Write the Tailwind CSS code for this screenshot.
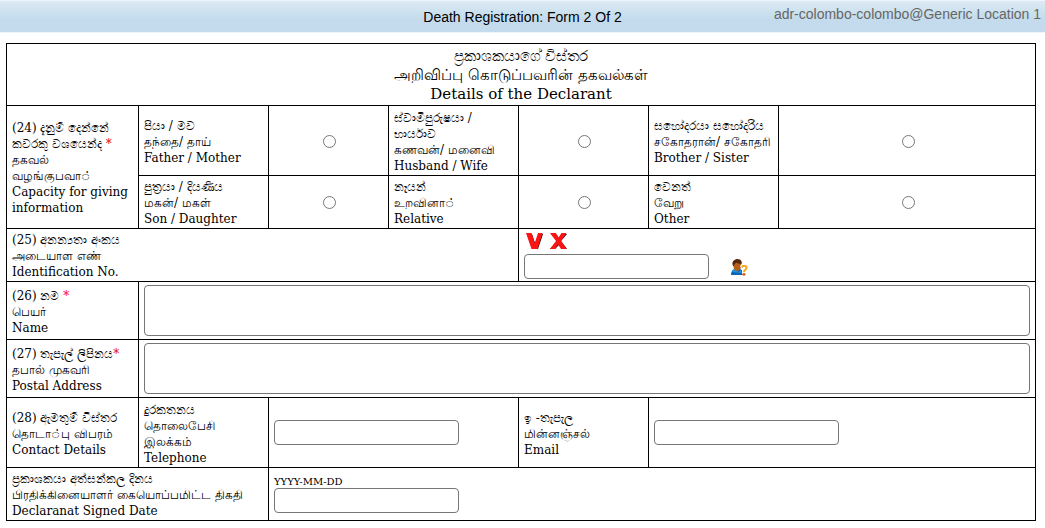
<!DOCTYPE html>
<html lang="en">
<head>
<meta charset="utf-8">
<meta name="viewport" content="width=device-width, initial-scale=1">
<title>Death Registration: Form 2 Of 2</title>
<script src="https://cdn.jsdelivr.net/npm/@tailwindcss/browser@4"></script>
</head>
<body class="bg-white text-black">
<header class="grid h-8 grid-cols-[1fr_auto_1fr] border-t border-[#eef5fa] bg-linear-to-b from-[#dceaf3] from-0% via-[#c6deed] via-50% to-[#c4dbee] to-60% font-['Liberation_Sans',sans-serif] text-[14px] leading-5 shadow-[0_1px_0_#edf4fa]">
  <h1 class="col-start-2 pt-[6px]">Death Registration: Form 2 Of 2</h1>
  <p class="whitespace-nowrap pt-[3px] pr-1 text-right text-[#666]">adr-colombo-colombo@Generic Location 1</p>
</header>
<main class="px-[6px] pt-[11px]">
<form class="pr-[3px]">
<table class="w-full table-fixed border-collapse border border-black font-['DejaVu_Serif',serif] text-[12px] leading-4 [&_label]:block [&_label]:pt-0.5 [&_td]:border [&_td]:border-black [&_td]:px-[5px] [&_td]:py-0 [&_th]:border [&_th]:border-black [&_th]:px-[5px] [&_th]:pt-0.5 [&_th]:pb-0 [&_th]:text-left [&_th]:font-normal">
  <colgroup><col class="w-[132px]"><col class="w-[130px]"><col class="w-[120px]"><col class="w-[130px]"><col class="w-[130px]"><col class="w-[130px]"><col></colgroup>
  <tbody>
  <tr class="h-[62px]">
    <td colspan="7"><h2 class="pt-0.5 text-center text-[15px] leading-[19px]">ප්‍රකාශකයාගේ විස්තර<br>அறிவிப்பு கொடுப்பவரின் தகவல்கள்<br>Details of the Declarant</h2></td>
  </tr>
  <tr class="h-[70px]">
    <th rowspan="2" scope="rowgroup">(24) දැනුම් දෙන්නේ කවරකු වශයෙන්ද <span class="text-red-600">*</span><br>தகவல்<br>வழங்குபவா◌்<br>Capacity for giving information</th>
    <td><label for="parent">පියා / මව<br>தந்தை/ தாய்<br>Father / Mother</label></td>
    <td class="text-center"><input id="parent" type="radio" name="capacity" class="ml-0.5 align-middle"></td>
    <td><label for="spouse">ස්වාමිපුරුෂයා / භාර්යාව<br>கணவன்/ மனைவி<br>Husband / Wife</label></td>
    <td class="text-center"><input id="spouse" type="radio" name="capacity" class="ml-0.5 align-middle"></td>
    <td><label for="sibling" class="whitespace-nowrap">සහෝදරයා සහෝදරිය<br>சகோதரான்/ சகோதரி<br>Brother / Sister</label></td>
    <td class="text-center"><input id="sibling" type="radio" name="capacity" class="ml-0.5 align-middle"></td>
  </tr>
  <tr class="h-[53px]">
    <td><label for="child">පුත්‍රයා / දියණිය<br>மகன்/ மகள்<br>Son / Daughter</label></td>
    <td class="text-center"><input id="child" type="radio" name="capacity" class="ml-0.5 align-middle"></td>
    <td><label for="relative">නෑයන්<br>உறவினா◌்<br>Relative</label></td>
    <td class="text-center"><input id="relative" type="radio" name="capacity" class="ml-0.5 align-middle"></td>
    <td><label for="other">වෙනත්<br>வேறு<br>Other</label></td>
    <td class="text-center"><input id="other" type="radio" name="capacity" class="ml-0.5 align-middle"></td>
  </tr>
  <tr class="h-[53px]">
    <td colspan="4"><label for="idno">(25) අනන්‍යතා අංකය<br>அடையாள எண்<br>Identification No.</label></td>
    <td colspan="3">
      <div class="flex h-[22px] items-start gap-[7px] pt-px pl-0.5">
        <button type="button" aria-label="V"><svg class="block" width="17" height="17" viewBox="0 0 17 17"><path fill="#300" d="M1 1h5l3 9 4-9h4l-5 15H6z"/><path fill="#fb1414" d="M0 0h5.500l3.300 10L12 0h4.500L11.500 16H5.500z"/></svg></button>
        <button type="button" aria-label="X"><svg class="block" width="17" height="17" viewBox="0 0 17 17"><path fill="#300" d="M1 1h5l3 4 3-4h5l-6 7 6 8h-5l-3-4-4 4H0l7-8z"/><path fill="#fb1414" d="M0 0h5.800L8.500 4.500 11.500 0h5L11 8l5.500 8H11l-3-4.500L5 16H0l6-8z"/></svg></button>
      </div>
      <div class="flex items-center gap-[22px]">
        <input id="idno" type="text" class="block h-[25px] w-[185px] rounded-[4px] border border-[#767676] bg-white px-1 outline-none">
        <button type="button" aria-label="Find person" class="pt-0.5"><svg class="block" width="17" height="17" viewBox="0 0 17 17"><path fill="#0768b8" d="M0 16c0-4 2-6 5-6h3c3 0 4 2 4 6z"/><path fill="#2590d8" d="M1 13c1-3 2-3 4-3l2 3 3-2 1 3z"/><path fill="#b65f17" d="M2.500 5c0-3 7.500-3 7.500 0v3c0 2-2 3-3 4-2 0-4.500-2-4.500-4z"/><path fill="#55290e" d="M2 7C0 2 4 0 6.500 0 10 0 12 3 10 6V5C7 5 6 3 5 4 4 5 3 5 3 7z"/><path fill="none" stroke="#fff" stroke-width="4" d="M11 8.500c.5-2.500 5-2 4.500.5 0 2-2.500 1.500-2.500 4v2"/><path fill="none" stroke="#f6a51a" stroke-width="2" d="M11 8.500c.5-2.500 5-2 4.500.5 0 2-2.500 1.500-2.500 4"/><circle cx="13" cy="15.200" r="1.500" fill="#e0651c"/></svg></button>
      </div>
    </td>
  </tr>
  <tr class="h-[58px]">
    <td><label for="name">(26) නම <span class="text-[#ff0033]">*</span><br>பெயர்<br>Name</label></td>
    <td colspan="6"><textarea id="name" class="block h-[51px] w-full resize-none rounded-[4px] border border-[#767676] bg-white p-1 outline-none"></textarea></td>
  </tr>
  <tr class="h-[58px]">
    <td><label for="address">(27) තැපැල් ලිපිනය<span class="text-red-600">*</span><br>தபால் முகவரி<br>Postal Address</label></td>
    <td colspan="6"><textarea id="address" class="block h-[51px] w-full resize-none rounded-[4px] border border-[#767676] bg-white p-1 outline-none"></textarea></td>
  </tr>
  <tr class="h-[70px]">
    <th scope="row">(28) ඇමතුම් විස්තර<br>தொடா◌்பு விபரம்<br>Contact Details</th>
    <td><label for="phone">දුරකතනය<br>தொலைபேசி<br>இலக்கம்<br>Telephone</label></td>
    <td colspan="2"><input id="phone" type="tel" class="block h-[25px] w-[185px] rounded-[4px] border border-[#767676] bg-white px-1 outline-none"></td>
    <td><label for="email">ඉ -තැපැල<br>மின்னஞ்சல்<br>Email</label></td>
    <td colspan="2"><input id="email" type="email" class="block h-[25px] w-[185px] rounded-[4px] border border-[#767676] bg-white px-1 outline-none"></td>
  </tr>
  <tr class="h-[53px]">
    <td colspan="2"><label for="signed" class="whitespace-nowrap">ප්‍රකාශකයා අත්සන්කල දිනය<br>பிரதிக்கினையாளர் கையொப்பமிட்ட திகதி<br>Declaranat Signed Date</label></td>
    <td colspan="5"><div class="text-[10px] leading-3" id="hint">YYYY-MM-DD</div><input id="signed" type="text" aria-describedby="hint" class="block h-[25px] w-[185px] rounded-[4px] border border-[#767676] bg-white px-1 outline-none"></td>
  </tr>
  </tbody>
</table>
</form>
</main>
</body>
</html>
